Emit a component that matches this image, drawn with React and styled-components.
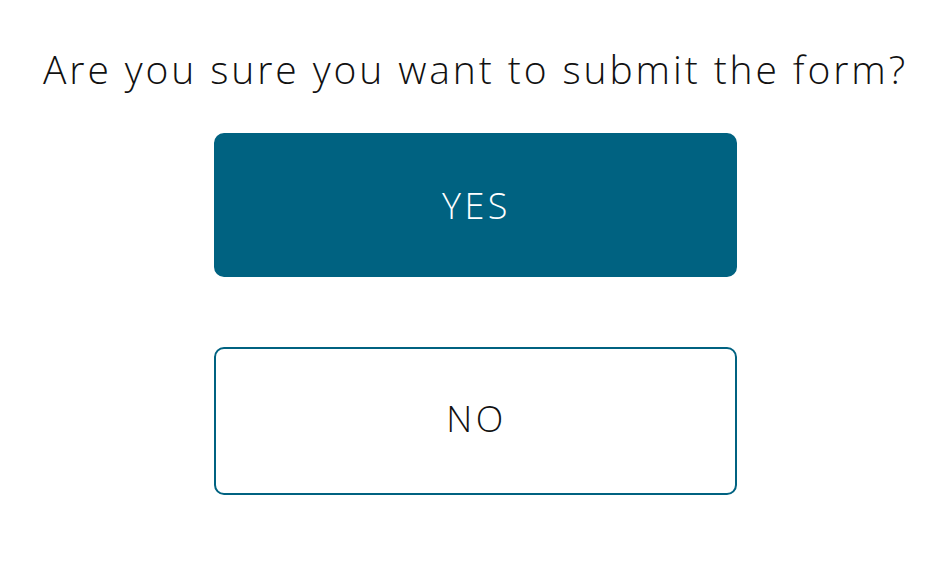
import styled, { createGlobalStyle } from 'styled-components';

const GlobalStyle = createGlobalStyle`
  body {
    margin: 0;
    background: #ffffff;
    font-family: "Open Sans", "Liberation Sans", sans-serif;
  }
`;

const Page = styled.main`
  display: flex;
  flex-direction: column;
  align-items: center;
  padding: 43px 1px 0 0;
`;

const Question = styled.h1`
  margin: 0 0 38px;
  font-size: 39px;
  font-weight: 300;
  letter-spacing: 2.9px;
  color: #111;
  line-height: 52px;
`;

const Choices = styled.div`
  display: flex;
  flex-direction: column;
  gap: 70px;
`;

const ChoiceButton = styled.button`
  width: 523px;
  height: ${({ primary }) => (primary ? '144px' : '148px')};
  border-radius: 10px;
  border: 2px solid #006281;
  background: ${({ primary }) => (primary ? '#006281' : '#ffffff')};
  color: ${({ primary }) => (primary ? '#ffffff' : '#111')};
  font-family: inherit;
  font-size: 36px;
  font-weight: 300;
  letter-spacing: 3.5px;
  padding: ${({ primary }) => (primary ? '0 0 0 2px' : '0 0 6px 2px')};
  cursor: pointer;
`;

function App() {
  return (
    <>
      <GlobalStyle />
      <Page>
        <Question>Are you sure you want to submit the form?</Question>
        <Choices>
          <ChoiceButton primary>YES</ChoiceButton>
          <ChoiceButton>NO</ChoiceButton>
        </Choices>
      </Page>
    </>
  );
}

export default App;
